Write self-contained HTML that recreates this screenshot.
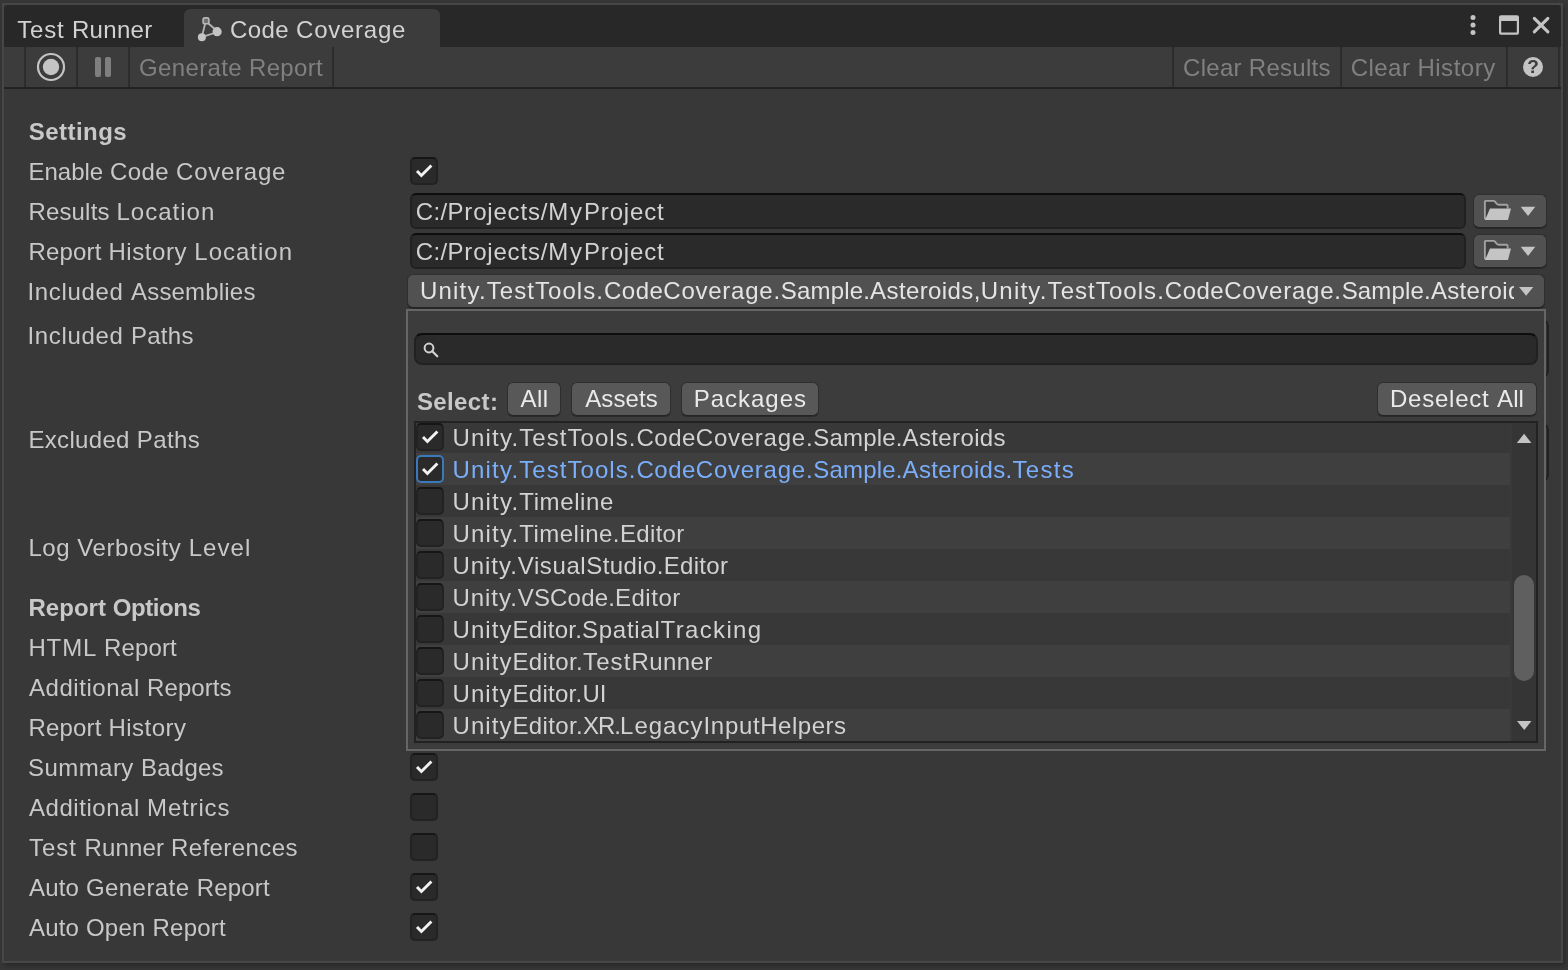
<!DOCTYPE html>
<html><head><meta charset="utf-8"><title>Code Coverage</title>
<style>
html,body{margin:0;padding:0;}
body{width:1568px;height:970px;overflow:hidden;background:#373737;position:relative;font-family:"Liberation Sans",sans-serif;font-size:24px;}
.a{position:absolute;box-sizing:border-box;}
.t{position:absolute;white-space:nowrap;line-height:27px;font-size:24px;}
#win{left:2px;top:3px;width:1561px;height:960px;border:2px solid #474747;background:#383838;box-shadow:2px 3px 5px rgba(0,0,0,.28);}
#tabbar{left:4px;top:5px;width:1557px;height:42px;background:#282828;border-top-left-radius:4px;border-top-right-radius:4px;}
#tab{left:184px;top:9px;width:256px;height:38px;background:#3c3c3c;border-radius:6px 6px 0 0;}
#toolbar{left:4px;top:47px;width:1557px;height:42px;background:#3c3c3c;border-bottom:2px solid #232323;}
.sep{width:2px;top:47px;height:40px;background:#2c2c2c;}
.cb{width:28px;height:28px;background:#2a2a2a;border:2px solid #222;border-top-color:#161616;border-radius:5px;}
.cb.f{border-color:#3a79bb;}
.tf{background:#2a2a2a;border:2px solid #212121;border-top-color:#0d0d0d;border-radius:6px;}
.btn{background:#585858;border:1px solid #2e2e2e;border-bottom-color:#242424;border-radius:6px;box-shadow:0 1px 0 rgba(0,0,0,.28);}
.dd{background:#515151;border:1px solid #2e2e2e;border-bottom-color:#242424;border-radius:6px;box-shadow:0 1px 0 rgba(0,0,0,.28);}
.row{left:416px;width:1094px;height:32px;}
.row.l{background:#3f3f3f;}
svg{position:absolute;overflow:visible;}
</style></head><body>
<div class="a" id="win"></div>
<div class="a" id="tabbar"></div>
<div class="a" id="tab"></div>
<div class="a" id="toolbar"></div>
<div class="a sep" style="left:24px"></div>
<div class="a sep" style="left:76px"></div>
<div class="a sep" style="left:128px"></div>
<div class="a sep" style="left:332px"></div>
<div class="a sep" style="left:1172px"></div>
<div class="a sep" style="left:1340px"></div>
<div class="a sep" style="left:1506px"></div>
<div class="a sep" style="left:1558px"></div>

<!-- tab icon -->
<svg style="left:194px;top:12px;filter:blur(.65px)" width="32" height="32" viewBox="194 12 32 32">
 <g stroke="#b4b4b4" stroke-width="1.8" fill="none" stroke-linecap="round">
  <path d="M205.2 23.5 L202.3 35 M207.8 23 L215.5 29.5 M204 36.3 L214.5 33"/>
 </g>
 <rect x="203.1" y="17.9" width="5.8" height="5.8" rx="1.8" fill="#707070" stroke="#b8b8b8" stroke-width="1.6"/>
 <circle cx="217.1" cy="31.7" r="4.6" fill="#c4c4c4"/>
 <circle cx="201.9" cy="37.3" r="4" fill="#c4c4c4"/>
</svg>
<!-- record -->
<svg style="left:36px;top:52px" width="30" height="30" viewBox="0 0 30 30">
 <circle cx="15" cy="15" r="13" fill="none" stroke="#c4c4c4" stroke-width="2.2"/>
 <circle cx="15" cy="15" r="8.2" fill="#c4c4c4"/>
</svg>
<!-- pause -->
<div class="a" style="left:95px;top:57px;width:6px;height:20px;background:#7f7f7f;border-radius:2px"></div>
<div class="a" style="left:105px;top:57px;width:6px;height:20px;background:#7f7f7f;border-radius:2px"></div>
<!-- help -->
<div class="a" style="left:1523px;top:57px;width:20px;height:20px;border-radius:10px;background:#c4c4c4;"></div>
<!-- kebab, maximize, close -->
<svg style="left:1460px;top:10px" width="100" height="32" viewBox="1460 10 100 32">
 <circle cx="1473" cy="17.5" r="2.5" fill="#c4c4c4"/><circle cx="1473" cy="25" r="2.5" fill="#c4c4c4"/><circle cx="1473" cy="32.5" r="2.5" fill="#c4c4c4"/>
 <path d="M1501 15.2 H1517 Q1519 15.2 1519 17.2 V32.8 Q1519 34.8 1517 34.8 H1501 Q1499 34.8 1499 32.8 V17.2 Q1499 15.2 1501 15.2 Z M1501.2 21 V32.6 H1516.8 V21 Z" fill="#c4c4c4" fill-rule="evenodd"/>
 <path d="M1534.3 18.3 L1547.9 31.9 M1547.9 18.3 L1534.3 31.9" stroke="#c4c4c4" stroke-width="3.1" stroke-linecap="round"/>
</svg>

<!-- checkboxes main -->
<div class="a cb" style="left:410px;top:157px"></div>
<div class="a cb" style="left:410px;top:753px"></div>
<div class="a cb" style="left:410px;top:793px"></div>
<div class="a cb" style="left:410px;top:833px"></div>
<div class="a cb" style="left:410px;top:873px"></div>
<div class="a cb" style="left:410px;top:913px"></div>

<!-- text fields -->
<div class="a tf" style="left:410px;top:193px;width:1056px;height:36px"></div>
<div class="a tf" style="left:410px;top:233px;width:1056px;height:36px"></div>
<div class="a dd" style="left:1473px;top:194px;width:74px;height:34px"></div>
<div class="a dd" style="left:1473px;top:234px;width:74px;height:34px"></div>
<!-- included / excluded path boxes peeking -->
<div class="a tf" style="left:1400px;top:320px;width:149px;height:57px;background:#323232"></div>
<div class="a tf" style="left:1400px;top:424px;width:149px;height:57px;background:#323232"></div>
<!-- dropdown -->
<div class="a dd" style="left:407px;top:274px;width:1138px;height:34px"></div>

<!-- popup -->
<div class="a" style="left:406px;top:309px;width:1140px;height:442px;background:#3c3c3c;border:2px solid #666;"></div>
<div class="a tf" style="left:414px;top:333px;width:1124px;height:32px;border-radius:8px"></div>
<div class="a btn" style="left:507px;top:382px;width:54px;height:34px"></div>
<div class="a btn" style="left:571px;top:382px;width:100px;height:34px"></div>
<div class="a btn" style="left:681px;top:382px;width:138px;height:34px"></div>
<div class="a btn" style="left:1377px;top:382px;width:160px;height:34px"></div>
<!-- list -->
<div class="a" style="left:414px;top:421px;width:1124px;height:322px;background:#383838;border:2px solid #222;"></div>
<div class="a" style="left:1510px;top:423px;width:26px;height:318px;background:#353535;border-left:2px solid #393939;"></div>
<div class="a cb" style="left:416px;top:423px"></div>
<div class="a row l" style="top:453px"></div>
<div class="a cb f" style="left:416px;top:455px"></div>
<div class="a cb" style="left:416px;top:487px"></div>
<div class="a row l" style="top:517px"></div>
<div class="a cb" style="left:416px;top:519px"></div>
<div class="a cb" style="left:416px;top:551px"></div>
<div class="a row l" style="top:581px"></div>
<div class="a cb" style="left:416px;top:583px"></div>
<div class="a cb" style="left:416px;top:615px"></div>
<div class="a row l" style="top:645px"></div>
<div class="a cb" style="left:416px;top:647px"></div>
<div class="a cb" style="left:416px;top:679px"></div>
<div class="a row l" style="top:709px"></div>
<div class="a cb" style="left:416px;top:711px"></div>
<div class="a" style="left:1514px;top:575px;width:20px;height:106px;border-radius:10px;background:#5f5f5f"></div>

<svg style="left:410px;top:157px" width="28" height="28" viewBox="0 0 28 28"><path d="M7 14 L11.4 18.5 L21.4 8.5" fill="none" stroke="#f2f2f2" stroke-width="2.9" stroke-linecap="butt" stroke-linejoin="miter"/></svg>
<svg style="left:410px;top:753px" width="28" height="28" viewBox="0 0 28 28"><path d="M7 14 L11.4 18.5 L21.4 8.5" fill="none" stroke="#f2f2f2" stroke-width="2.9" stroke-linecap="butt" stroke-linejoin="miter"/></svg>
<svg style="left:410px;top:873px" width="28" height="28" viewBox="0 0 28 28"><path d="M7 14 L11.4 18.5 L21.4 8.5" fill="none" stroke="#f2f2f2" stroke-width="2.9" stroke-linecap="butt" stroke-linejoin="miter"/></svg>
<svg style="left:410px;top:913px" width="28" height="28" viewBox="0 0 28 28"><path d="M7 14 L11.4 18.5 L21.4 8.5" fill="none" stroke="#f2f2f2" stroke-width="2.9" stroke-linecap="butt" stroke-linejoin="miter"/></svg>
<svg style="left:416px;top:423px" width="28" height="28" viewBox="0 0 28 28"><path d="M7 14 L11.4 18.5 L21.4 8.5" fill="none" stroke="#f2f2f2" stroke-width="2.9" stroke-linecap="butt" stroke-linejoin="miter"/></svg>
<svg style="left:416px;top:455px" width="28" height="28" viewBox="0 0 28 28"><path d="M7 14 L11.4 18.5 L21.4 8.5" fill="none" stroke="#f2f2f2" stroke-width="2.9" stroke-linecap="butt" stroke-linejoin="miter"/></svg>
<svg style="left:1519px;top:205px" width="18" height="13" viewBox="0 0 18 13"><polygon points="1.80,1.80 16.30,1.80 9.05,11.00" fill="#c4c4c4"/></svg>
<svg style="left:1484px;top:200px;filter:blur(.3px)" width="28" height="21" viewBox="0 0 28 21">
 <path d="M0.9 19 V1.9 Q0.9 0.9 1.9 0.9 H9.3 Q10.3 0.9 11 1.7 L12.8 3.9 Q13.5 4.7 14.5 4.7 H22.4 Q23.6 4.7 23.6 5.9 V9 H6 L1 19 Z" fill="#000" fill-opacity=".22" stroke="none"/>
 <path d="M0.9 19 V1.9 Q0.9 0.9 1.9 0.9 H9.3 Q10.3 0.9 11 1.7 L12.8 3.9 Q13.5 4.7 14.5 4.7 H22.4 Q23.6 4.7 23.6 5.9 V8.5" fill="none" stroke="#c4c4c4" stroke-opacity=".72" stroke-width="1.9"/>
 <polygon points="6,8.6 27,8.6 24,19.9 0.6,19.9 2.6,16.5" fill="#c4c4c4"/></svg>
<svg style="left:1519px;top:245px" width="18" height="13" viewBox="0 0 18 13"><polygon points="1.80,1.80 16.30,1.80 9.05,11.00" fill="#c4c4c4"/></svg>
<svg style="left:1484px;top:240px;filter:blur(.3px)" width="28" height="21" viewBox="0 0 28 21">
 <path d="M0.9 19 V1.9 Q0.9 0.9 1.9 0.9 H9.3 Q10.3 0.9 11 1.7 L12.8 3.9 Q13.5 4.7 14.5 4.7 H22.4 Q23.6 4.7 23.6 5.9 V9 H6 L1 19 Z" fill="#000" fill-opacity=".22" stroke="none"/>
 <path d="M0.9 19 V1.9 Q0.9 0.9 1.9 0.9 H9.3 Q10.3 0.9 11 1.7 L12.8 3.9 Q13.5 4.7 14.5 4.7 H22.4 Q23.6 4.7 23.6 5.9 V8.5" fill="none" stroke="#c4c4c4" stroke-opacity=".72" stroke-width="1.9"/>
 <polygon points="6,8.6 27,8.6 24,19.9 0.6,19.9 2.6,16.5" fill="#c4c4c4"/></svg>
<svg style="left:1518px;top:286px" width="17" height="11" viewBox="0 0 17 11"><polygon points="1.00,1.00 15.30,1.00 8.15,9.80" fill="#c4c4c4"/></svg>
<svg style="left:1515px;top:432px" width="18" height="13" viewBox="0 0 18 13"><polygon points="1.80,11.00 16.40,11.00 9.10,1.80" fill="#c4c4c4"/></svg>
<svg style="left:1516px;top:720px" width="17" height="12" viewBox="0 0 17 12"><polygon points="1.00,1.00 15.50,1.00 8.25,10.00" fill="#c4c4c4"/></svg>
<svg style="left:420px;top:340px" width="22" height="20" viewBox="420 340 22 20"><circle cx="429" cy="348" r="4.4" fill="none" stroke="#d2d2d2" stroke-width="2"/><path d="M432.3 351.3 L437.3 356.3" stroke="#d2d2d2" stroke-width="2.2" stroke-linecap="round"/></svg>
<div class="a" id="txt" style="left:0;top:0;width:1568px;height:970px;will-change:transform">
<span class="t" style="left:1527.2px;top:57px;font-size:19px;line-height:20px;font-weight:bold;color:#3c3c3c;">?</span>
<span class="t" style="left:17.20px;top:16px;color:#d2d2d2;"><span style="letter-spacing:0.803px">Test </span><span style="letter-spacing:0.335px">Runner</span></span>
<span class="t" style="left:230.00px;top:16px;color:#d2d2d2;"><span style="letter-spacing:0.411px">Code </span><span style="letter-spacing:0.741px">Coverage</span></span>
<span class="t" style="left:139.00px;top:54px;color:#808080;"><span style="letter-spacing:0.363px">Generate </span><span style="letter-spacing:0.327px">Report</span></span>
<span class="t" style="left:1183.00px;top:54px;color:#808080;"><span style="letter-spacing:0.297px">Clear </span><span style="letter-spacing:0.262px">Results</span></span>
<span class="t" style="left:1350.80px;top:54px;color:#808080;"><span style="letter-spacing:0.430px">Clear </span><span style="letter-spacing:0.521px">History</span></span>
<span class="t" style="left:28.75px;top:118px;letter-spacing:0.453px;color:#c8c8c8;font-weight:bold;">Settings</span>
<span class="t" style="left:28.40px;top:158px;color:#c8c8c8;"><span style="letter-spacing:0.015px">Enable </span><span style="letter-spacing:0.431px">Code </span><span style="letter-spacing:0.741px">Coverage</span></span>
<span class="t" style="left:28.40px;top:198px;color:#c8c8c8;"><span style="letter-spacing:0.176px">Results </span><span style="letter-spacing:1.001px">Location</span></span>
<span class="t" style="left:28.40px;top:238px;color:#c8c8c8;"><span style="letter-spacing:0.185px">Report </span><span style="letter-spacing:0.570px">History </span><span style="letter-spacing:1.001px">Location</span></span>
<span class="t" style="left:27.40px;top:278px;color:#c8c8c8;"><span style="letter-spacing:0.688px">Included </span><span style="letter-spacing:0.188px">Assemblies</span></span>
<span class="t" style="left:27.40px;top:322px;color:#c8c8c8;"><span style="letter-spacing:0.677px">Included </span><span style="letter-spacing:0.307px">Paths</span></span>
<span class="t" style="left:28.40px;top:426px;color:#c8c8c8;"><span style="letter-spacing:0.328px">Excluded </span><span style="letter-spacing:0.420px">Paths</span></span>
<span class="t" style="left:28.40px;top:534px;color:#c8c8c8;"><span style="letter-spacing:0.522px">Log </span><span style="letter-spacing:0.611px">Verbosity </span><span style="letter-spacing:1.064px">Level</span></span>
<span class="t" style="left:28.40px;top:594px;color:#c8c8c8;font-weight:bold;"><span style="letter-spacing:0.057px">Report </span><span style="letter-spacing:-0.451px">Options</span></span>
<span class="t" style="left:28.40px;top:634px;color:#c8c8c8;"><span style="letter-spacing:0.900px">HTML </span><span style="letter-spacing:0.147px">Report</span></span>
<span class="t" style="left:29.00px;top:674px;color:#c8c8c8;"><span style="letter-spacing:0.547px">Additional </span><span style="letter-spacing:0.077px">Reports</span></span>
<span class="t" style="left:28.40px;top:714px;color:#c8c8c8;"><span style="letter-spacing:0.185px">Report </span><span style="letter-spacing:0.505px">History</span></span>
<span class="t" style="left:28.00px;top:754px;color:#c8c8c8;"><span style="letter-spacing:0.444px">Summary </span><span style="letter-spacing:0.260px">Badges</span></span>
<span class="t" style="left:29.00px;top:794px;color:#c8c8c8;"><span style="letter-spacing:0.547px">Additional </span><span style="letter-spacing:0.828px">Metrics</span></span>
<span class="t" style="left:29.00px;top:834px;color:#c8c8c8;"><span style="letter-spacing:0.983px">Test </span><span style="letter-spacing:0.131px">Runner </span><span style="letter-spacing:0.430px">References</span></span>
<span class="t" style="left:29.00px;top:874px;color:#c8c8c8;"><span style="letter-spacing:0.172px">Auto </span><span style="letter-spacing:0.441px">Generate </span><span style="letter-spacing:0.207px">Report</span></span>
<span class="t" style="left:29.00px;top:914px;color:#c8c8c8;"><span style="letter-spacing:0.172px">Auto </span><span style="letter-spacing:0.244px">Open </span><span style="letter-spacing:0.227px">Report</span></span>
<span class="t" style="left:415.80px;top:198px;color:#d2d2d2;"><span style="letter-spacing:0.344px">C:/</span><span style="letter-spacing:0.815px">Projects/</span><span style="letter-spacing:1.904px">My</span><span style="letter-spacing:0.829px">Project</span></span>
<span class="t" style="left:415.80px;top:238px;color:#d2d2d2;"><span style="letter-spacing:0.344px">C:/</span><span style="letter-spacing:0.815px">Projects/</span><span style="letter-spacing:1.904px">My</span><span style="letter-spacing:0.829px">Project</span></span>
<span class="t" style="left:416.90px;top:388px;letter-spacing:0.398px;color:#c8c8c8;font-weight:bold;">Select:</span>
<span class="t" style="left:520.60px;top:385px;letter-spacing:0.430px;color:#eaeaea;">All</span>
<span class="t" style="left:585.25px;top:385px;letter-spacing:0.095px;color:#eaeaea;">Assets</span>
<span class="t" style="left:693.75px;top:385px;letter-spacing:0.979px;color:#eaeaea;">Packages</span>
<span class="t" style="left:1390.00px;top:385px;color:#eaeaea;"><span style="letter-spacing:0.773px">Deselect </span><span style="letter-spacing:0.130px">All</span></span>
<span class="t" style="left:452.50px;top:424px;color:#d2d2d2;"><span style="letter-spacing:1.197px">Unity.</span><span style="letter-spacing:1.059px">Test</span><span style="letter-spacing:1.051px">Tools.</span><span style="letter-spacing:0.469px">Code</span><span style="letter-spacing:0.758px">Coverage.</span><span style="letter-spacing:0.165px">Sample.</span><span style="letter-spacing:0.370px">Asteroids</span></span>
<span class="t" style="left:452.50px;top:456px;color:#7baefa;"><span style="letter-spacing:1.197px">Unity.</span><span style="letter-spacing:1.059px">Test</span><span style="letter-spacing:1.051px">Tools.</span><span style="letter-spacing:0.469px">Code</span><span style="letter-spacing:0.758px">Coverage.</span><span style="letter-spacing:0.165px">Sample.</span><span style="letter-spacing:0.329px">Asteroids.</span><span style="letter-spacing:1.296px">Tests</span></span>
<span class="t" style="left:452.50px;top:488px;color:#d2d2d2;"><span style="letter-spacing:1.197px">Unity.</span><span style="letter-spacing:0.614px">Timeline</span></span>
<span class="t" style="left:452.50px;top:520px;color:#d2d2d2;"><span style="letter-spacing:1.197px">Unity.</span><span style="letter-spacing:0.476px">Timeline.</span><span style="letter-spacing:0.309px">Editor</span></span>
<span class="t" style="left:452.50px;top:552px;color:#d2d2d2;"><span style="letter-spacing:0.947px">Unity.</span><span style="letter-spacing:0.594px">Visual</span><span style="letter-spacing:0.397px">Studio.</span><span style="letter-spacing:0.309px">Editor</span></span>
<span class="t" style="left:452.50px;top:584px;color:#d2d2d2;"><span style="letter-spacing:0.947px">Unity.</span><span style="letter-spacing:0.170px">VSCode.</span><span style="letter-spacing:0.509px">Editor</span></span>
<span class="t" style="left:452.50px;top:616px;color:#d2d2d2;"><span style="letter-spacing:1.064px">Unity</span><span style="letter-spacing:0.209px">Editor.</span><span style="letter-spacing:0.731px">Spatial</span><span style="letter-spacing:1.352px">Tracking</span></span>
<span class="t" style="left:452.50px;top:648px;color:#d2d2d2;"><span style="letter-spacing:1.064px">Unity</span><span style="letter-spacing:0.352px">Editor.</span><span style="letter-spacing:1.121px">Test</span><span style="letter-spacing:0.405px">Runner</span></span>
<span class="t" style="left:452.50px;top:680px;color:#d2d2d2;"><span style="letter-spacing:1.064px">Unity</span><span style="letter-spacing:0.280px">Editor.</span><span style="letter-spacing:-0.082px">UI</span></span>
<span class="t" style="left:452.50px;top:712px;color:#d2d2d2;"><span style="letter-spacing:1.064px">Unity</span><span style="letter-spacing:0.352px">Editor.</span><span style="letter-spacing:-1.003px">XR.</span><span style="letter-spacing:1.018px">Legacy</span><span style="letter-spacing:0.674px">Input</span><span style="letter-spacing:0.508px">Helpers</span></span>
<div class="a" style="left:410px;top:276px;width:1104px;height:30px;overflow:hidden"><span class="t" style="left:10.00px;top:1px;color:#e4e4e4;"><span style="letter-spacing:1.197px">Unity.</span><span style="letter-spacing:1.059px">Test</span><span style="letter-spacing:1.051px">Tools.</span><span style="letter-spacing:0.469px">Code</span><span style="letter-spacing:0.758px">Coverage.</span><span style="letter-spacing:0.165px">Sample.</span><span style="letter-spacing:0.404px">Asteroids,</span><span style="letter-spacing:1.197px">Unity.</span><span style="letter-spacing:1.059px">Test</span><span style="letter-spacing:1.051px">Tools.</span><span style="letter-spacing:0.469px">Code</span><span style="letter-spacing:0.758px">Coverage.</span><span style="letter-spacing:0.165px">Sample.</span><span style="letter-spacing:0.329px">Asteroids.</span><span style="letter-spacing:1.296px">Tests</span></span></div>
</div>
</body></html>
